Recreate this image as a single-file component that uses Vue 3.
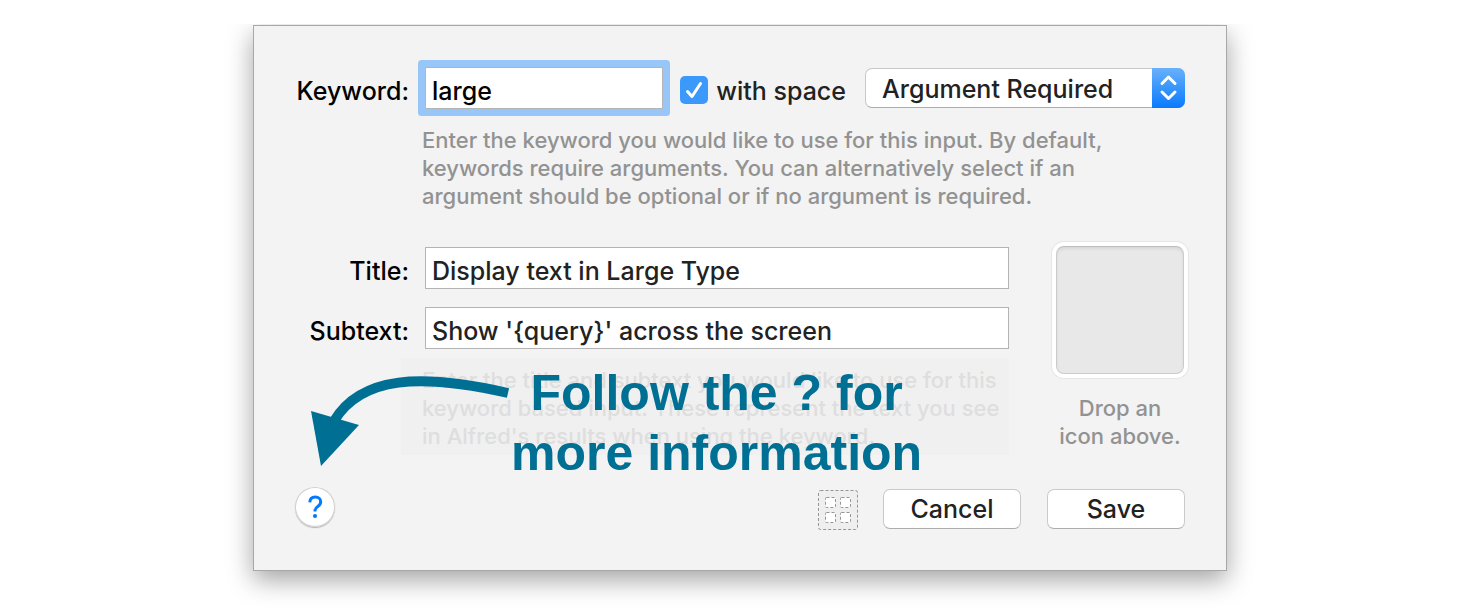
<script setup>
import { ref } from 'vue'

const keyword = ref('large')
const withSpace = ref(true)
const argument = ref('Argument Required')
const title = ref('Display text in Large Type')
const subtext = ref("Show '{query}' across the screen")
const argumentOptions = ['Argument Required', 'Argument Optional', 'No Argument']
</script>

<template>
  <main class="stage">
    <form class="dialog" @submit.prevent>
      <div class="row keyword-row">
        <label class="label" for="keyword">Keyword:</label>
        <div class="keyword-controls">
          <input id="keyword" v-model="keyword" class="field focused" type="text" />
          <label class="check">
            <input v-model="withSpace" type="checkbox" />
            <svg v-if="withSpace" class="tick" viewBox="0 0 28 28" aria-hidden="true">
              <path d="M7.5 15.5 L12 20.5 L20.5 7.5" />
            </svg>
            <span>with space</span>
          </label>
          <div class="picker">
            <select v-model="argument" aria-label="Argument">
              <option v-for="option in argumentOptions" :key="option">{{ option }}</option>
            </select>
            <span class="stepper">
              <svg viewBox="0 0 33 40" aria-hidden="true">
                <path d="M10 15.5 L16.5 9 L23 15.5 M10 24 L16.5 30.5 L23 24" />
              </svg>
            </span>
          </div>
        </div>
      </div>

      <p class="hint keyword-hint">
        Enter the keyword you would like to use for this input. By default,<br />
        keywords require arguments. You can alternatively select if an<br />
        argument should be optional or if no argument is required.
      </p>

      <div class="details">
        <div class="texts">
          <div class="row">
            <label class="label" for="title">Title:</label>
            <input id="title" v-model="title" class="field" type="text" />
          </div>
          <div class="row">
            <label class="label" for="subtext">Subtext:</label>
            <input id="subtext" v-model="subtext" class="field" type="text" />
          </div>
          <p class="hint faded">
            Enter the title and subtext you would like to use for this<br />
            keyword based input. These represent the text you see<br />
            in Alfred's results when using the keyword.
          </p>
        </div>
        <div class="icon-drop">
          <div class="well"></div>
          <p class="hint">Drop an<br />icon above.</p>
        </div>
      </div>

      <div class="footer">
        <button class="help" type="button" aria-label="Help">
          <svg viewBox="0 0 40 40" aria-hidden="true">
            <path d="M14.8 15.4 C14.9 11.9 17.1 10 20.3 10 C23.5 10 25.7 12 25.7 14.8 C25.7 17 24.6 18.3 22.8 19.5 C20.7 20.9 20 21.8 20 23.8 V24.6" />
            <circle cx="20" cy="29" r="2.1" />
          </svg>
        </button>
        <button class="placeholders" type="button" aria-label="Placeholders">
          <svg viewBox="0 0 40 40" aria-hidden="true">
            <rect class="frame" x="0.5" y="1.5" width="39" height="39" rx="2" />
            <rect x="7.5" y="8.5" width="10" height="10" rx="1" />
            <rect x="22.5" y="8.5" width="10" height="10" rx="1" />
            <rect x="7.5" y="23.5" width="10" height="10" rx="1" />
            <rect x="22.5" y="23.5" width="10" height="10" rx="1" />
          </svg>
        </button>
        <button class="push" type="button">Cancel</button>
        <button class="push" type="submit">Save</button>
      </div>

      <div class="callout">
        <svg class="arrow" viewBox="0 0 200 100" aria-hidden="true">
          <path class="shaft" d="M197 30 C110 10 50 13 23 58" />
          <path class="head" d="M0 48 L48 62 L10 103 Z" />
        </svg>
        <p>Follow the ? for<br />more information</p>
      </div>
    </form>
  </main>
</template>

<style>
body {
  background: #fff;
}
</style>

<style scoped>
*,
*::before {
  box-sizing: border-box;
}

.stage {
  display: flex;
  justify-content: center;
  padding: 25px 24px 40px;
  font-family: Inter, Roboto, "Liberation Sans", sans-serif;
  font-weight: 450;
}

.dialog {
  position: relative;
  width: 100%;
  max-width: 974px;
  padding: 41px;
  border: 1px solid #a8a8a8;
  background: #f3f3f3;
  box-shadow: 0 9px 24px rgba(0, 0, 0, 0.36);
  clip-path: inset(-1px -40px -50px -40px);
  color: #000;
  font-size: 25px;
  line-height: 32px;
}

p {
  margin: 0;
}

input,
select,
button {
  margin: 0;
  font: inherit;
}

.row {
  display: grid;
  grid-template-columns: 114px 1fr;
  column-gap: 16px;
  align-items: center;
}

.label {
  padding-top: 6px;
  text-align: right;
  white-space: nowrap;
}

.field {
  width: 100%;
  min-width: 0;
  height: 42px;
  padding: 5px 6px 0;
  border: 1px solid #b4b4b4;
  border-radius: 0;
  outline: none;
  background: #fff;
  color: #222;
}

.field.focused {
  flex: 1;
  color: #000;
  border-radius: 1px;
  box-shadow: 0 0 0 7px #98c6f8;
}

.keyword-controls {
  display: flex;
  align-items: center;
}

.check {
  position: relative;
  display: flex;
  align-items: center;
  gap: 8px;
  margin: 4px 19px 0 17px;
  color: #222;
  white-space: nowrap;
}

.check input {
  appearance: none;
  width: 28px;
  height: 28px;
  border-radius: 5px;
  background: #fff;
}

.check input:checked {
  background: #3b99fc;
}

.check span {
  padding-top: 2px;
}

.tick {
  position: absolute;
  left: 0;
  width: 28px;
  height: 28px;
  fill: none;
  stroke: #fff;
  stroke-width: 3;
  stroke-linecap: round;
  stroke-linejoin: round;
  pointer-events: none;
}

.picker {
  position: relative;
  flex: none;
  width: 320px;
  height: 40px;
}

select {
  appearance: none;
  width: 100%;
  height: 100%;
  padding: 2px 40px 0 16px;
  border: 1px solid #c8c8c8;
  border-bottom-color: #acacac;
  border-radius: 7px;
  outline: none;
  background: #fff;
  color: #222;
}

.stepper {
  position: absolute;
  top: 0;
  right: 0;
  width: 33px;
  height: 40px;
  border-radius: 0 7px 7px 0;
  background: linear-gradient(#69b1fa, #087aff);
  pointer-events: none;
}

.stepper svg {
  display: block;
  fill: none;
  stroke: #fff;
  stroke-width: 3;
  stroke-linecap: round;
  stroke-linejoin: round;
}

.hint {
  color: #929292;
  font-size: 22px;
  line-height: 28px;
}

.keyword-hint {
  margin: 17px 0 37px 127px;
}

.details {
  display: flex;
  align-items: flex-start;
  justify-content: space-between;
}

.texts {
  display: grid;
  flex: 1;
  max-width: 714px;
  row-gap: 18px;
}

.faded {
  margin: -9px 0 0 106px;
  padding: 8px 0 5px 21px;
  background: #f0f0f0;
  color: #dedede;
  white-space: nowrap;
}

.icon-drop {
  flex: none;
  margin: -5px -3px 0 0;
  text-align: center;
}

.well {
  width: 136px;
  height: 136px;
  margin-bottom: 16px;
  padding: 4px;
  border-radius: 12px;
  background: #fff;
  box-shadow: 0 0 0 1px #e6e6e6;
}

.well::before {
  content: "";
  display: block;
  height: 100%;
  border: 1px solid #cbcbcb;
  border-top-color: #bdbdbd;
  border-radius: 8px;
  background: #e8e8e8;
  box-shadow: inset 0 2px 3px rgba(0, 0, 0, 0.07);
}

.footer {
  display: flex;
  align-items: flex-end;
  height: 42px;
  margin-top: 32px;
}

.help {
  align-self: flex-start;
  width: 40px;
  height: 40px;
  margin-right: auto;
  padding: 0;
  border: 0;
  border-radius: 50%;
  background: #fff;
  box-shadow: inset 0 0 0 1px #cfcfcf, 0 1px 1px rgba(0, 0, 0, 0.25);
}

.help svg {
  display: block;
  fill: none;
  stroke: #007aff;
  stroke-width: 3;
}

.help circle {
  fill: #007aff;
  stroke: none;
}

.placeholders {
  width: 40px;
  height: 40px;
  margin-right: 25px;
  padding: 0;
  border: 0;
  background: none;
}

.placeholders svg {
  display: block;
  overflow: visible;
  fill: #fff;
  stroke: #959595;
  stroke-dasharray: 3 2;
}

.placeholders .frame {
  fill: #efefef;
}

.push {
  width: 138px;
  height: 40px;
  padding: 0;
  border: 1px solid #cacaca;
  border-bottom-color: #adadad;
  border-radius: 7px;
  background: #fff;
  color: #222;
}

.push + .push {
  margin-left: 26px;
}

.callout {
  position: absolute;
  top: 337px;
  left: 57px;
  display: flex;
  color: #006f94;
  font-family: "Liberation Sans", Arial, sans-serif;
  font-size: 50px;
  font-weight: 700;
  line-height: 60px;
  text-align: center;
  white-space: nowrap;
  pointer-events: none;
}

.arrow {
  width: 200px;
  height: 100px;
  overflow: visible;
}

.shaft {
  fill: none;
  stroke: currentColor;
  stroke-width: 10;
}

.head {
  fill: currentColor;
}
</style>
